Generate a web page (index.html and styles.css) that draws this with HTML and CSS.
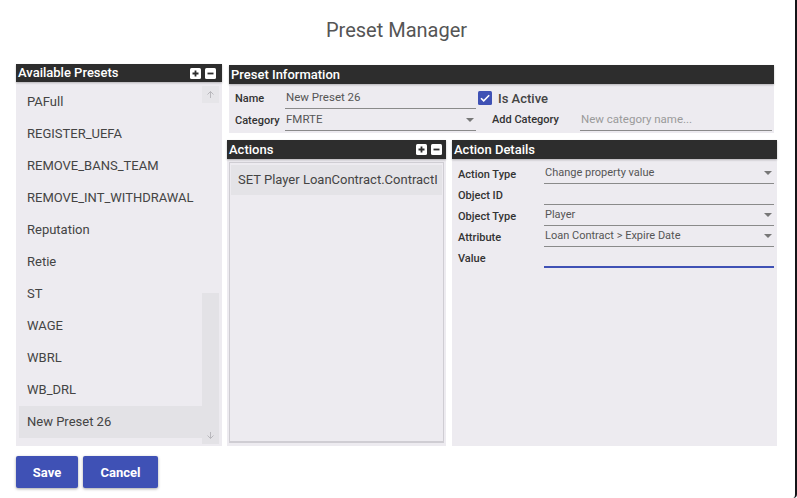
FILE: index.html
```html
<!DOCTYPE html>
<html>
<head>
<meta charset="utf-8">
<link rel="stylesheet" href="styles.css">
</head>
<body>
<div class="dialog">
  <h1 class="title">Preset Manager</h1>
  <div class="main">
    <section class="panel presets">
      <header class="panel-head">
        <span>Available Presets</span>
        <span class="tools">
          <svg class="tool" viewBox="0 0 11 11"><rect x="0" y="0" width="11" height="11" rx="1.5" fill="#fff"/><path d="M5.5 2.5v6M2.5 5.5h6" stroke="#2d2d2d" stroke-width="1.8"/></svg>
          <svg class="tool" viewBox="0 0 11 11"><rect x="0" y="0" width="11" height="11" rx="1.5" fill="#fff"/><path d="M2.5 5.5h6" stroke="#2d2d2d" stroke-width="1.8"/></svg>
        </span>
      </header>
      <div class="preset-body">
        <div class="preset-box">
          <ul class="preset-list">
            <li>PAFull</li>
            <li>REGISTER_UEFA</li>
            <li>REMOVE_BANS_TEAM</li>
            <li>REMOVE_INT_WITHDRAWAL</li>
            <li>Reputation</li>
            <li>Retie</li>
            <li>ST</li>
            <li>WAGE</li>
            <li>WBRL</li>
            <li>WB_DRL</li>
            <li class="selected">New Preset 26</li>
          </ul>
          <div class="scrollbar">
            <div class="sb-btn sb-up"><svg viewBox="0 0 9 9"><path d="M4.5 8V1.5M1.5 4.5l3-3 3 3" stroke="#b9b8bd" stroke-width="1" fill="none"/></svg></div>
            <div class="sb-track"></div>
            <div class="sb-thumb">
              <div class="sb-btn sb-down"><svg viewBox="0 0 9 9"><path d="M4.5 1v6.5M1.5 4.5l3 3 3-3" stroke="#b9b8bd" stroke-width="1" fill="none"/></svg></div>
            </div>
          </div>
        </div>
      </div>
    </section>

    <div class="right">
      <section class="panel info">
        <header class="panel-head"><span>Preset Information</span></header>
        <div class="info-body">
          <label class="lbl">Name</label>
          <div class="field">New Preset 26</div>
          <div class="active">
            <svg class="check" viewBox="0 0 14 14"><rect width="14" height="14" rx="1.5" fill="#3f51b5"/><path d="M3 7.2l2.7 2.7L11.2 4.3" stroke="#fff" stroke-width="1.6" fill="none"/></svg>
            <span>Is Active</span>
          </div>
          <label class="lbl">Category</label>
          <div class="field select">FMRTE<i class="caret"></i></div>
          <label class="lbl add">Add Category</label>
          <div class="field placeholder">New category name...</div>
        </div>
      </section>

      <div class="lower">
        <section class="panel actions">
          <header class="panel-head">
            <span>Actions</span>
            <span class="tools">
              <svg class="tool" viewBox="0 0 11 11"><rect x="0" y="0" width="11" height="11" rx="1.5" fill="#fff"/><path d="M5.5 2.5v6M2.5 5.5h6" stroke="#2d2d2d" stroke-width="1.8"/></svg>
              <svg class="tool" viewBox="0 0 11 11"><rect x="0" y="0" width="11" height="11" rx="1.5" fill="#fff"/><path d="M2.5 5.5h6" stroke="#2d2d2d" stroke-width="1.8"/></svg>
            </span>
          </header>
          <div class="actions-body">
            <ul class="action-list">
              <li class="selected">SET Player LoanContract.ContractI</li>
            </ul>
          </div>
        </section>

        <section class="panel details">
          <header class="panel-head"><span>Action Details</span></header>
          <div class="details-body">
            <label class="lbl">Action Type</label>
            <div class="field select">Change property value<i class="caret"></i></div>
            <label class="lbl">Object ID</label>
            <div class="field"></div>
            <label class="lbl">Object Type</label>
            <div class="field select">Player<i class="caret"></i></div>
            <label class="lbl">Attribute</label>
            <div class="field select">Loan Contract &gt; Expire Date<i class="caret"></i></div>
            <label class="lbl">Value</label>
            <div class="field focused"></div>
          </div>
        </section>
      </div>
    </div>
  </div>
  <div class="buttons">
    <button class="btn">Save</button>
    <button class="btn">Cancel</button>
  </div>
</div>
</body>
</html>
```

FILE: styles.css
```css
* { box-sizing: border-box; }
html, body { margin: 0; padding: 0; background: #fff; }
body {
  font-family: Roboto, "Liberation Sans", sans-serif;
  color: #333;
  width: 797px;
  height: 498px;
  overflow: hidden;
}
.dialog {
  width: 797px;
  height: 498px;
  padding: 0 18px 0 16px;
  border-right: 2px solid #141418;
  border-bottom-right-radius: 4px;
  background: #fff;
}
.title {
  margin: 0;
  height: 64px;
  padding-top: 18px;
  line-height: 24px;
  font-size: 20px;
  font-weight: 400;
  color: #555;
  text-align: center;
}
.main {
  display: flex;
  gap: 5px;
  height: 382px;
}
.panel { background: #edebf0; display: flex; flex-direction: column; }
.panel-head {
  background: #2d2d2d;
  color: #fff;
  font-size: 13px;
  font-weight: 500;
  height: 19px;
  line-height: 19px;
  padding: 0 4px 0 2px;
  display: flex;
  align-items: center;
  justify-content: space-between;
  box-shadow: 0 1px 2px rgba(0,0,0,0.25);
  flex: none;
}
.tools { display: flex; gap: 4px; align-items: center; }
.tool { width: 11px; height: 11px; display: block; }
.presets .tools { margin-right: 2px; }

/* presets */
.presets { width: 206px; flex: none; }
.presets .panel-head { height: 18px; line-height: 18px; }
.preset-body { flex: 1; padding: 4px 3px 2px 3px; }
.preset-box { display: flex; height: 100%; }
.preset-list {
  list-style: none; margin: 0; padding: 0;
  flex: 1;
}
.preset-list li {
  height: 32px;
  line-height: 32px;
  padding-left: 8px;
  font-size: 13px;
  color: #444;
  white-space: nowrap;
}
.preset-list li.selected { background: #e3e2e6; }
.scrollbar {
  width: 17px;
  display: flex;
  flex-direction: column;
}
.sb-btn { height: 17px; display: flex; align-items: center; justify-content: center; }
.sb-btn svg { width: 9px; height: 9px; display: block; }
.sb-up { background: #e6e5e9; }
.sb-track { height: 190px; }
.sb-thumb {
  flex: 1;
  background: #e3e2e6;
  display: flex;
  flex-direction: column;
  justify-content: flex-end;
}

/* right column */
.right {
  width: 550px;
  flex: none;
  margin-top: 1px;
  display: flex;
  flex-direction: column;
  gap: 7px;
}
.info { margin: 0 3px 0 2px; }
.info-body {
  display: grid;
  grid-template-columns: 50px 191px 16px 88px 192px;
  grid-template-rows: 25px 22px;
  align-items: end;
  padding: 0 0 2px 6px;
}
.lbl {
  font-size: 11px;
  font-weight: 500;
  color: #333;
  line-height: 16px;
  padding-bottom: 2px;
  white-space: nowrap;
}
.field {
  position: relative;
  height: 21px;
  line-height: 17px;
  font-size: 11px;
  color: #555;
  border-bottom: 1px solid #8a8a8a;
  padding-left: 1px;
  white-space: nowrap;
  overflow: hidden;
}
.info .field { height: 20px; font-size: 11.5px; }
.placeholder { color: #9a9a9a; grid-column: 5; }
.caret {
  position: absolute;
  right: 2px;
  top: 7px;
  width: 0; height: 0;
  border-left: 4px solid transparent;
  border-right: 4px solid transparent;
  border-top: 4px solid #777;
}
.active {
  grid-column: 3 / 6;
  display: flex;
  align-items: center;
  gap: 6px;
  padding-left: 2px;
  align-self: center;
  margin-top: 3px;
  font-size: 13px;
  font-weight: 500;
  color: #444;
}
.check { width: 14px; height: 14px; display: block; }
.add { grid-column: 4; padding-bottom: 3px; }

.lower { display: flex; gap: 6px; height: 306px; }
.actions { width: 219px; flex: none; }
.actions-body { flex: 1; padding: 3px 2px; }
.action-list {
  list-style: none; margin: 0; padding: 2px 1px;
  height: 100%;
  border: 1px solid #cfcdd3;
  border-bottom-width: 2px;
}
.action-list li {
  height: 30px;
  line-height: 30px;
  padding-left: 7px;
  font-size: 13px;
  color: #444;
  white-space: nowrap;
  overflow: hidden;
}
.action-list li.selected { background: #e4e3e7; }

.details { width: 325px; flex: none; }
.details-body {
  display: grid;
  grid-template-columns: 86px 230px;
  grid-template-rows: 21px 21px 21px 21px 21px;
  align-items: end;
  padding: 4px 0 0 6px;
}
.details-body .lbl { align-self: center; padding: 2px 0 0 0; }
.details-body .field { height: 21px; line-height: 19px; }
.details-body .caret { top: 8px; }
.field.focused { border-bottom: 2px solid #3f51b5; }

.buttons {
  display: flex;
  gap: 5px;
  margin-top: 10px;
}
.btn {
  height: 32px;
  background: #3f51b5;
  color: #fff;
  border: none;
  border-radius: 2px;
  font-family: Roboto, "Liberation Sans", sans-serif;
  font-size: 13px;
  font-weight: 700;
  padding: 0;
  box-shadow: 0 1px 3px rgba(0,0,0,0.35);
}
.btn:first-child { width: 62px; }
.btn:last-child { width: 75px; }
```
